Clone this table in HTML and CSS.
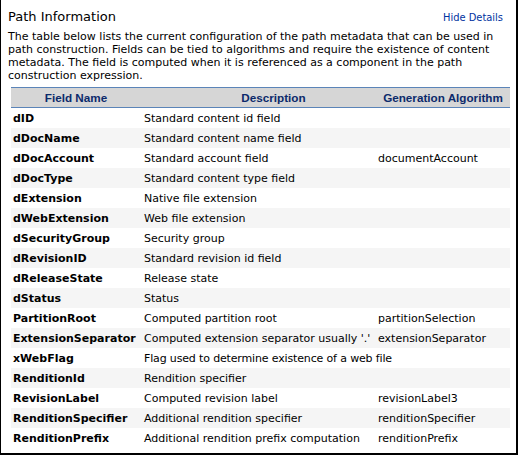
FILE: index.html
```html
<!DOCTYPE html>
<html>
<head>
<meta charset="utf-8">
<link rel="stylesheet" href="styles.css">
</head>
<body>
<div class="panel">
  <div class="head">
    <span class="title">Path Information</span>
    <a class="toggle" href="#">Hide Details</a>
  </div>
  <p class="intro">The table below lists the current configuration of the path metadata that can be used in path construction. Fields can be tied to algorithms and require the existence of content metadata. The field is computed when it is referenced as a component in the path construction expression.</p>
  <table class="fields">
    <colgroup><col class="c1"><col class="c2"><col class="c3"></colgroup>
    <thead>
      <tr><th>Field Name</th><th class="h2">Description</th><th>Generation Algorithm</th></tr>
    </thead>
    <tbody>
      <tr><td class="name">dID</td><td>Standard content id field</td><td></td></tr>
      <tr><td class="name">dDocName</td><td>Standard content name field</td><td></td></tr>
      <tr><td class="name">dDocAccount</td><td>Standard account field</td><td>documentAccount</td></tr>
      <tr><td class="name">dDocType</td><td>Standard content type field</td><td></td></tr>
      <tr><td class="name">dExtension</td><td>Native file extension</td><td></td></tr>
      <tr><td class="name">dWebExtension</td><td>Web file extension</td><td></td></tr>
      <tr><td class="name">dSecurityGroup</td><td>Security group</td><td></td></tr>
      <tr><td class="name">dRevisionID</td><td>Standard revision id field</td><td></td></tr>
      <tr><td class="name">dReleaseState</td><td>Release state</td><td></td></tr>
      <tr><td class="name">dStatus</td><td>Status</td><td></td></tr>
      <tr><td class="name">PartitionRoot</td><td>Computed partition root</td><td>partitionSelection</td></tr>
      <tr><td class="name">ExtensionSeparator</td><td>Computed extension separator usually '.'</td><td>extensionSeparator</td></tr>
      <tr><td class="name">xWebFlag</td><td class="long">Flag used to determine existence of a web file</td><td></td></tr>
      <tr><td class="name">RenditionId</td><td>Rendition specifier</td><td></td></tr>
      <tr><td class="name">RevisionLabel</td><td>Computed revision label</td><td>revisionLabel3</td></tr>
      <tr><td class="name">RenditionSpecifier</td><td>Additional rendition specifier</td><td>renditionSpecifier</td></tr>
      <tr><td class="name">RenditionPrefix</td><td>Additional rendition prefix computation</td><td>renditionPrefix</td></tr>
    </tbody>
  </table>
</div>
</body>
</html>
```
FILE: styles.css
```css
html, body {
  margin: 0;
  padding: 0;
  background: #fff;
}
body {
  font-family: "DejaVu Sans", Verdana, sans-serif;
  font-size: 11px;
  color: #000;
}
.panel {
  box-sizing: border-box;
  width: 518px;
  height: 455px;
  border-left: 1px solid #000;
  border-right: 2px solid #000;
  border-bottom: 2px solid #000;
  padding: 9px 10px 0 7px;
}
.head {
  display: flex;
  justify-content: space-between;
  align-items: baseline;
}
.title {
  font-size: 13px;
  line-height: 16px;
}
.toggle {
  color: #0033a0;
  text-decoration: none;
  font-family: "DejaVu Sans Condensed", "DejaVu Sans", sans-serif;
  font-size: 11px;
  margin-right: 3px;
}
.intro {
  margin: 5px 0 0 0;
  line-height: 13px;
}
.fields {
  border-collapse: collapse;
  table-layout: fixed;
  width: 499px;
  margin: 5px 0 0 3px;
}
.fields .c1 { width: 130px; }
.fields .c3 { width: 134px; }
.fields th {
  background: #d6d6d6;
  color: #0c2a6b;
  font-weight: bold;
  font-family: "Liberation Sans", Arial, sans-serif;
  font-size: 11.7px;
  height: 19px;
  padding: 0 2px;
  border-top: 1px solid #5b84b8;
  border-bottom: 1px solid #5b84b8;
  text-align: center;
  white-space: nowrap;
}
.fields th.h2 {
  padding: 0 2px 0 32px;
}
.fields td {
  height: 20px;
  padding: 0 2px;
  white-space: nowrap;
}
.fields td:nth-child(2) {
  padding-left: 3px;
}
.fields td.long {
  letter-spacing: -0.15px;
}
.fields td.name {
  font-weight: bold;
}
.fields tbody tr:nth-child(even) td {
  background: #f5f5f5;
}
```
